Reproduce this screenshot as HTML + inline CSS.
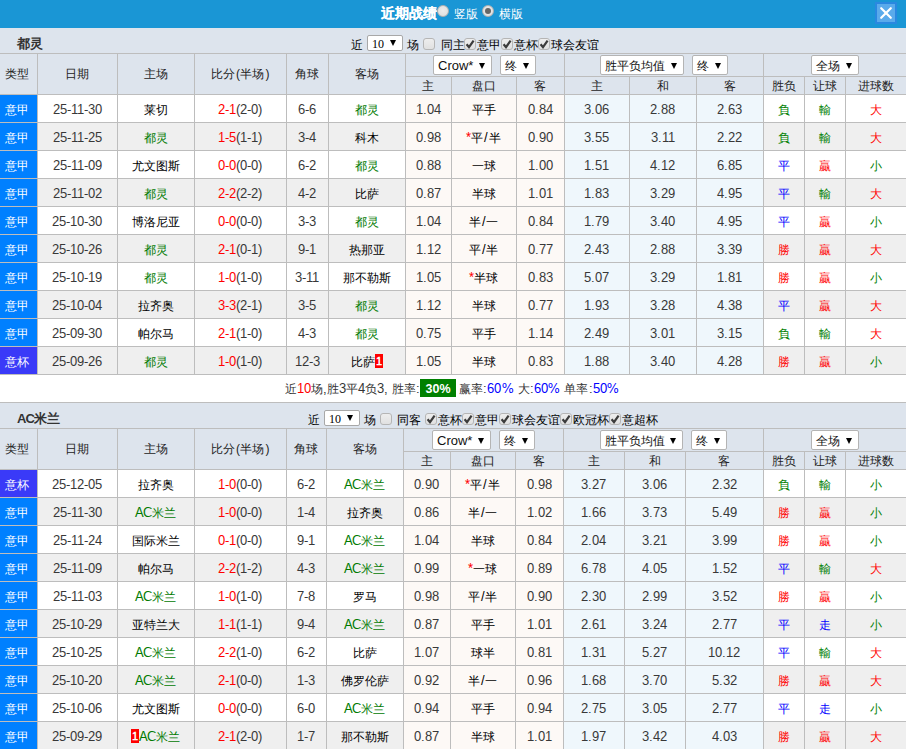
<!DOCTYPE html><html><head><meta charset="utf-8"><style>
.ac{letter-spacing:-1.1px;font-size:12px;margin-right:1px}
.ac2{letter-spacing:-1px}
@font-face{font-family:"NumF";src:local("Liberation Sans");size-adjust:104.2%;unicode-range:U+0000-00FF}
*{margin:0;padding:0;box-sizing:border-box}
html,body{width:906px;height:749px;overflow:hidden;background:#fff}
body{font-family:"Liberation Sans",sans-serif;font-size:12px;color:#333;position:relative}
.title{position:absolute;left:0;top:0;width:906px;height:28px;background:#1a96d5;color:#fff}
.title .tt{position:absolute;left:381px;top:4px;font-size:14px;font-weight:bold;-webkit-text-stroke:0.1px #fff;line-height:18px;white-space:nowrap}
.radio{position:absolute;width:12px;height:12px;border-radius:50%;background:radial-gradient(circle at 50% 45%,#ececec,#dcdcdc);border:1px solid #b0b0b0}
.radio.on:after{content:"";position:absolute;left:2px;top:2px;width:6px;height:6px;border-radius:50%;background:#666}
.title .lab{position:absolute;top:7px;font-size:12px;line-height:15px}
.close{position:absolute;left:875px;top:2px;width:22px;height:22px;background:#2a88e0}
.close .in{position:absolute;left:2px;top:2px;width:18px;height:18px;background:#5aaaeb}
.sec{position:absolute;left:0;width:906px}
.bar{position:relative;height:26px;background:#dde4ed;border-bottom:1px solid #bdbdbd}
.tn{position:absolute;left:17px;top:8px;font-size:13px;line-height:16px;color:#333}
.ct{position:absolute;top:9px;line-height:16px;white-space:nowrap;color:#000}
.cbx{position:absolute;top:10px;width:12px;height:12px;line-height:0}
.nsel{position:absolute;top:7px;width:36px;height:16px;background:#fff;border:1px solid #a8a8a8;border-radius:2px}
.nsel b{position:absolute;left:4px;top:1px;font:normal 12px/14px 'Liberation Serif',serif;color:#000}
.nsel i{position:absolute;left:22px;top:4px;width:0;height:0;border-left:3px solid transparent;border-right:3px solid transparent;border-top:6px solid #000}
.head{position:relative;height:41px;background:#dde4ed}
.hc{position:absolute;border-right:1px solid #bdbdbd;border-bottom:1px solid #bdbdbd;text-align:center;color:#222;white-space:nowrap}
.sel{position:absolute;top:1px;height:20px;background:#fff;border:1px solid #b4b4b4;border-radius:2px;line-height:20px;text-align:left;padding-left:4px;color:#111;font-size:12px;white-space:nowrap}
.sel.lat{font-size:13px;padding-left:4px}
.sel i{position:absolute;right:6px;top:7px;width:0;height:0;border-left:3px solid transparent;border-right:3px solid transparent;border-top:6px solid #000}
.row{display:flex;height:28px;font-family:"NumF","Liberation Sans",sans-serif;color:#383838}
.row>div.cj{color:#000}
.sl{margin:0 0.8px}
.row>div{height:28px;border-right:1px solid #bdbdbd;border-bottom:1px solid #bdbdbd;text-align:center;line-height:24px;padding-top:3px;padding-right:1px;white-space:nowrap;overflow:hidden;flex:none}
.row>div.c{background:#fff}
.row.ev>div.c{background:#efefef}
.row>div.o{background:#fdf9f6}
.row>div.a{background:#eff7fc}
.row>div.typ{background:#0080ff;color:#fff;padding-right:4px}
.row>div.typ.cup{background:#3a3af8}
.gr{color:#007a00}
.rd{color:#f00}
.bl{color:#00f}
.res.g{color:#008000}.res.r{color:#f00}.res.b{color:#00f}
.star{color:#f00}
.card{display:inline-block;background:#f00;color:#fff;width:8px;height:14px;line-height:14px;font-size:11px;font-weight:bold;vertical-align:top;margin-top:4px;text-align:center}
.sum{position:relative;height:28px;font-family:"NumF","Liberation Sans",sans-serif;border-bottom:1px solid #bdbdbd;background:#fff}
.sum .st{position:absolute;top:6px;line-height:16px;white-space:nowrap}
.pct{position:absolute;left:420px;top:4px;background:#008000;color:#fff;width:36px;height:18px;text-align:center;font-size:12.5px;font-weight:bold;line-height:21px;font-family:'Liberation Sans',sans-serif}
</style></head><body>
<svg width="0" height="0" style="position:absolute"><defs><linearGradient id="cbg" x1="0" y1="0" x2="0" y2="1"><stop offset="0" stop-color="#eeeeee"/><stop offset="1" stop-color="#e0e0e0"/></linearGradient></defs></svg>
<div class="title"><div class="tt">近期战绩</div><span class="radio" style="left:437px;top:5px"></span><span class="lab" style="left:454px">竖版</span><span class="radio on" style="left:482px;top:5px"></span><span class="lab" style="left:499px">横版</span><div class="close"><div class="in"><svg width="18" height="18" viewBox="0 0 18 18" style="position:absolute;left:0;top:0"><path d="M4.2 4.2L13.8 13.8M13.8 4.2L4.2 13.8" stroke="#fff" stroke-width="2.2" stroke-linecap="round"/></svg></div></div></div>
<div class="sec" style="top:28px">
<div class="bar"><b class="tn">都灵</b><span class="ct" style="left:351px">近</span><span class="nsel" style="left:367px"><b>10</b><i></i></span><span class="ct" style="left:407px">场</span><span class="cbx" style="left:423px"><svg width="12" height="12" viewBox="0 0 12 12"><rect x="0.5" y="0.5" width="11" height="11" rx="2.5" fill="url(#cbg)" stroke="#b5b5b5"/></svg></span><span class="ct" style="left:441px">同主</span><span class="cbx" style="left:464px"><svg width="12" height="12" viewBox="0 0 12 12"><rect x="0.5" y="0.5" width="11" height="11" rx="2.5" fill="url(#cbg)" stroke="#b5b5b5"/><path d="M2.6 6.2L5 9.2L9.6 2.6" fill="none" stroke="#3c3c3c" stroke-width="2.2" stroke-linejoin="miter"/></svg></span><span class="ct" style="left:477px">意甲</span><span class="cbx" style="left:501px"><svg width="12" height="12" viewBox="0 0 12 12"><rect x="0.5" y="0.5" width="11" height="11" rx="2.5" fill="url(#cbg)" stroke="#b5b5b5"/><path d="M2.6 6.2L5 9.2L9.6 2.6" fill="none" stroke="#3c3c3c" stroke-width="2.2" stroke-linejoin="miter"/></svg></span><span class="ct" style="left:514px">意杯</span><span class="cbx" style="left:538px"><svg width="12" height="12" viewBox="0 0 12 12"><rect x="0.5" y="0.5" width="11" height="11" rx="2.5" fill="url(#cbg)" stroke="#b5b5b5"/><path d="M2.6 6.2L5 9.2L9.6 2.6" fill="none" stroke="#3c3c3c" stroke-width="2.2" stroke-linejoin="miter"/></svg></span><span class="ct" style="left:551px">球会友谊</span></div>
<div class="head">
<div class="hc" style="left:0px;top:0px;width:38px;height:41px;line-height:40px;padding-right:4px">类型</div>
<div class="hc" style="left:38px;top:0px;width:80px;height:41px;line-height:40px;padding-right:1px">日期</div>
<div class="hc" style="left:118px;top:0px;width:77px;height:41px;line-height:40px;padding-right:1px">主场</div>
<div class="hc" style="left:195px;top:0px;width:92px;height:41px;line-height:40px;padding-right:1px">比分<span style="margin-left:1.5px">(</span>半场<span style="margin-left:1.5px">)</span></div>
<div class="hc" style="left:287px;top:0px;width:42px;height:41px;line-height:40px;padding-right:1px">角球</div>
<div class="hc" style="left:329px;top:0px;width:77px;height:41px;line-height:40px;padding-right:1px">客场</div>
<div class="hc" style="left:406px;top:0px;width:159px;height:23px;"></div>
<div class="hc" style="left:565px;top:0px;width:199px;height:23px;"></div>
<div class="hc" style="left:764px;top:0px;width:143px;height:23px;"></div>
<span class="sel lat" style="left:433px;width:59px">Crow*<i></i></span>
<span class="sel " style="left:500px;width:36px">终<i></i></span>
<span class="sel " style="left:600px;width:84px">胜平负均值<i></i></span>
<span class="sel " style="left:692px;width:36px">终<i></i></span>
<span class="sel " style="left:811px;width:48px">全场<i></i></span>
<div class="hc" style="left:406px;top:23px;width:46px;height:18px;line-height:16px;padding-top:1px;padding-right:1px">主</div>
<div class="hc" style="left:452px;top:23px;width:65px;height:18px;line-height:16px;padding-top:1px;padding-right:1px">盘口</div>
<div class="hc" style="left:517px;top:23px;width:48px;height:18px;line-height:16px;padding-top:1px;padding-right:1px">客</div>
<div class="hc" style="left:565px;top:23px;width:65px;height:18px;line-height:16px;padding-top:1px;padding-right:1px">主</div>
<div class="hc" style="left:630px;top:23px;width:67px;height:18px;line-height:16px;padding-top:1px;padding-right:1px">和</div>
<div class="hc" style="left:697px;top:23px;width:67px;height:18px;line-height:16px;padding-top:1px;padding-right:1px">客</div>
<div class="hc" style="left:764px;top:23px;width:41px;height:18px;line-height:16px;padding-top:1px;padding-right:1px">胜负</div>
<div class="hc" style="left:805px;top:23px;width:41px;height:18px;line-height:16px;padding-top:1px;padding-right:1px">让球</div>
<div class="hc" style="left:846px;top:23px;width:61px;height:18px;line-height:16px;padding-top:1px;padding-right:1px">进球数</div>
</div>
<div class="rows">
<div class="row">
<div class="typ" style="width:38px">意甲</div>
<div class="c" style="width:80px">25-11-30</div>
<div class="c cj" style="width:77px"><span>莱切</span></div>
<div class="c" style="width:92px"><span class="rd">2-1</span>(2-0)</div>
<div class="c" style="width:42px">6-6</div>
<div class="c cj" style="width:77px"><span class="gr">都灵</span></div>
<div class="o" style="width:46px">1.04</div>
<div class="o cj" style="width:65px">平手</div>
<div class="o" style="width:48px">0.84</div>
<div class="a" style="width:65px">3.06</div>
<div class="a" style="width:67px">2.88</div>
<div class="a" style="width:67px">2.63</div>
<div class="c res g" style="width:41px">負</div>
<div class="c res g" style="width:41px">輸</div>
<div class="c res r" style="width:61px">大</div>
</div>
<div class="row ev">
<div class="typ" style="width:38px">意甲</div>
<div class="c" style="width:80px">25-11-25</div>
<div class="c cj" style="width:77px"><span class="gr">都灵</span></div>
<div class="c" style="width:92px"><span class="rd">1-5</span>(1-1)</div>
<div class="c" style="width:42px">3-4</div>
<div class="c cj" style="width:77px"><span>科木</span></div>
<div class="o" style="width:46px">0.98</div>
<div class="o cj" style="width:65px"><span class="star">*</span>平<span class="sl">/</span>半</div>
<div class="o" style="width:48px">0.90</div>
<div class="a" style="width:65px">3.55</div>
<div class="a" style="width:67px">3.11</div>
<div class="a" style="width:67px">2.22</div>
<div class="c res g" style="width:41px">負</div>
<div class="c res g" style="width:41px">輸</div>
<div class="c res r" style="width:61px">大</div>
</div>
<div class="row">
<div class="typ" style="width:38px">意甲</div>
<div class="c" style="width:80px">25-11-09</div>
<div class="c cj" style="width:77px"><span>尤文图斯</span></div>
<div class="c" style="width:92px"><span class="rd">0-0</span>(0-0)</div>
<div class="c" style="width:42px">6-2</div>
<div class="c cj" style="width:77px"><span class="gr">都灵</span></div>
<div class="o" style="width:46px">0.88</div>
<div class="o cj" style="width:65px">一球</div>
<div class="o" style="width:48px">1.00</div>
<div class="a" style="width:65px">1.51</div>
<div class="a" style="width:67px">4.12</div>
<div class="a" style="width:67px">6.85</div>
<div class="c res b" style="width:41px">平</div>
<div class="c res r" style="width:41px">贏</div>
<div class="c res g" style="width:61px">小</div>
</div>
<div class="row ev">
<div class="typ" style="width:38px">意甲</div>
<div class="c" style="width:80px">25-11-02</div>
<div class="c cj" style="width:77px"><span class="gr">都灵</span></div>
<div class="c" style="width:92px"><span class="rd">2-2</span>(2-2)</div>
<div class="c" style="width:42px">4-2</div>
<div class="c cj" style="width:77px"><span>比萨</span></div>
<div class="o" style="width:46px">0.87</div>
<div class="o cj" style="width:65px">半球</div>
<div class="o" style="width:48px">1.01</div>
<div class="a" style="width:65px">1.83</div>
<div class="a" style="width:67px">3.29</div>
<div class="a" style="width:67px">4.95</div>
<div class="c res b" style="width:41px">平</div>
<div class="c res g" style="width:41px">輸</div>
<div class="c res r" style="width:61px">大</div>
</div>
<div class="row">
<div class="typ" style="width:38px">意甲</div>
<div class="c" style="width:80px">25-10-30</div>
<div class="c cj" style="width:77px"><span>博洛尼亚</span></div>
<div class="c" style="width:92px"><span class="rd">0-0</span>(0-0)</div>
<div class="c" style="width:42px">3-3</div>
<div class="c cj" style="width:77px"><span class="gr">都灵</span></div>
<div class="o" style="width:46px">1.04</div>
<div class="o cj" style="width:65px">半<span class="sl">/</span>一</div>
<div class="o" style="width:48px">0.84</div>
<div class="a" style="width:65px">1.79</div>
<div class="a" style="width:67px">3.40</div>
<div class="a" style="width:67px">4.95</div>
<div class="c res b" style="width:41px">平</div>
<div class="c res r" style="width:41px">贏</div>
<div class="c res g" style="width:61px">小</div>
</div>
<div class="row ev">
<div class="typ" style="width:38px">意甲</div>
<div class="c" style="width:80px">25-10-26</div>
<div class="c cj" style="width:77px"><span class="gr">都灵</span></div>
<div class="c" style="width:92px"><span class="rd">2-1</span>(0-1)</div>
<div class="c" style="width:42px">9-1</div>
<div class="c cj" style="width:77px"><span>热那亚</span></div>
<div class="o" style="width:46px">1.12</div>
<div class="o cj" style="width:65px">平<span class="sl">/</span>半</div>
<div class="o" style="width:48px">0.77</div>
<div class="a" style="width:65px">2.43</div>
<div class="a" style="width:67px">2.88</div>
<div class="a" style="width:67px">3.39</div>
<div class="c res r" style="width:41px">勝</div>
<div class="c res r" style="width:41px">贏</div>
<div class="c res r" style="width:61px">大</div>
</div>
<div class="row">
<div class="typ" style="width:38px">意甲</div>
<div class="c" style="width:80px">25-10-19</div>
<div class="c cj" style="width:77px"><span class="gr">都灵</span></div>
<div class="c" style="width:92px"><span class="rd">1-0</span>(1-0)</div>
<div class="c" style="width:42px">3-11</div>
<div class="c cj" style="width:77px"><span>那不勒斯</span></div>
<div class="o" style="width:46px">1.05</div>
<div class="o cj" style="width:65px"><span class="star">*</span>半球</div>
<div class="o" style="width:48px">0.83</div>
<div class="a" style="width:65px">5.07</div>
<div class="a" style="width:67px">3.29</div>
<div class="a" style="width:67px">1.81</div>
<div class="c res r" style="width:41px">勝</div>
<div class="c res r" style="width:41px">贏</div>
<div class="c res g" style="width:61px">小</div>
</div>
<div class="row ev">
<div class="typ" style="width:38px">意甲</div>
<div class="c" style="width:80px">25-10-04</div>
<div class="c cj" style="width:77px"><span>拉齐奥</span></div>
<div class="c" style="width:92px"><span class="rd">3-3</span>(2-1)</div>
<div class="c" style="width:42px">3-5</div>
<div class="c cj" style="width:77px"><span class="gr">都灵</span></div>
<div class="o" style="width:46px">1.12</div>
<div class="o cj" style="width:65px">半球</div>
<div class="o" style="width:48px">0.77</div>
<div class="a" style="width:65px">1.93</div>
<div class="a" style="width:67px">3.28</div>
<div class="a" style="width:67px">4.38</div>
<div class="c res b" style="width:41px">平</div>
<div class="c res r" style="width:41px">贏</div>
<div class="c res r" style="width:61px">大</div>
</div>
<div class="row">
<div class="typ" style="width:38px">意甲</div>
<div class="c" style="width:80px">25-09-30</div>
<div class="c cj" style="width:77px"><span>帕尔马</span></div>
<div class="c" style="width:92px"><span class="rd">2-1</span>(1-0)</div>
<div class="c" style="width:42px">4-3</div>
<div class="c cj" style="width:77px"><span class="gr">都灵</span></div>
<div class="o" style="width:46px">0.75</div>
<div class="o cj" style="width:65px">平手</div>
<div class="o" style="width:48px">1.14</div>
<div class="a" style="width:65px">2.49</div>
<div class="a" style="width:67px">3.01</div>
<div class="a" style="width:67px">3.15</div>
<div class="c res g" style="width:41px">負</div>
<div class="c res g" style="width:41px">輸</div>
<div class="c res r" style="width:61px">大</div>
</div>
<div class="row ev">
<div class="typ cup" style="width:38px">意杯</div>
<div class="c" style="width:80px">25-09-26</div>
<div class="c cj" style="width:77px"><span class="gr">都灵</span></div>
<div class="c" style="width:92px"><span class="rd">1-0</span>(1-0)</div>
<div class="c" style="width:42px">12-3</div>
<div class="c cj" style="width:77px"><span>比萨</span><span class="card">1</span></div>
<div class="o" style="width:46px">1.05</div>
<div class="o cj" style="width:65px">半球</div>
<div class="o" style="width:48px">0.83</div>
<div class="a" style="width:65px">1.88</div>
<div class="a" style="width:67px">3.40</div>
<div class="a" style="width:67px">4.28</div>
<div class="c res r" style="width:41px">勝</div>
<div class="c res r" style="width:41px">贏</div>
<div class="c res g" style="width:61px">小</div>
</div>
</div>
<div class="sum"><span class="st" style="left:285px;letter-spacing:0px">近<span class="rd">10</span>场,胜3平4负3, 胜率:</span><span class="pct">30%</span><span class="st" style="left:459px;letter-spacing:0.1px">赢率:<span class="bl">60%</span> 大:<span class="bl">60%</span> 单率:<span class="bl">50%</span></span></div>
</div>
<div class="sec" style="top:403px">
<div class="bar"><b class="tn"><span class="ac2">AC</span>米兰</b><span class="ct" style="left:308px">近</span><span class="nsel" style="left:324px"><b>10</b><i></i></span><span class="ct" style="left:364px">场</span><span class="cbx" style="left:380px"><svg width="12" height="12" viewBox="0 0 12 12"><rect x="0.5" y="0.5" width="11" height="11" rx="2.5" fill="url(#cbg)" stroke="#b5b5b5"/></svg></span><span class="ct" style="left:397px">同客</span><span class="cbx" style="left:425px"><svg width="12" height="12" viewBox="0 0 12 12"><rect x="0.5" y="0.5" width="11" height="11" rx="2.5" fill="url(#cbg)" stroke="#b5b5b5"/><path d="M2.6 6.2L5 9.2L9.6 2.6" fill="none" stroke="#3c3c3c" stroke-width="2.2" stroke-linejoin="miter"/></svg></span><span class="ct" style="left:438px">意杯</span><span class="cbx" style="left:462px"><svg width="12" height="12" viewBox="0 0 12 12"><rect x="0.5" y="0.5" width="11" height="11" rx="2.5" fill="url(#cbg)" stroke="#b5b5b5"/><path d="M2.6 6.2L5 9.2L9.6 2.6" fill="none" stroke="#3c3c3c" stroke-width="2.2" stroke-linejoin="miter"/></svg></span><span class="ct" style="left:475px">意甲</span><span class="cbx" style="left:499px"><svg width="12" height="12" viewBox="0 0 12 12"><rect x="0.5" y="0.5" width="11" height="11" rx="2.5" fill="url(#cbg)" stroke="#b5b5b5"/><path d="M2.6 6.2L5 9.2L9.6 2.6" fill="none" stroke="#3c3c3c" stroke-width="2.2" stroke-linejoin="miter"/></svg></span><span class="ct" style="left:512px">球会友谊</span><span class="cbx" style="left:560px"><svg width="12" height="12" viewBox="0 0 12 12"><rect x="0.5" y="0.5" width="11" height="11" rx="2.5" fill="url(#cbg)" stroke="#b5b5b5"/><path d="M2.6 6.2L5 9.2L9.6 2.6" fill="none" stroke="#3c3c3c" stroke-width="2.2" stroke-linejoin="miter"/></svg></span><span class="ct" style="left:573px">欧冠杯</span><span class="cbx" style="left:609px"><svg width="12" height="12" viewBox="0 0 12 12"><rect x="0.5" y="0.5" width="11" height="11" rx="2.5" fill="url(#cbg)" stroke="#b5b5b5"/><path d="M2.6 6.2L5 9.2L9.6 2.6" fill="none" stroke="#3c3c3c" stroke-width="2.2" stroke-linejoin="miter"/></svg></span><span class="ct" style="left:622px">意超杯</span></div>
<div class="head">
<div class="hc" style="left:0px;top:0px;width:38px;height:41px;line-height:40px;padding-right:4px">类型</div>
<div class="hc" style="left:38px;top:0px;width:80px;height:41px;line-height:40px;padding-right:1px">日期</div>
<div class="hc" style="left:118px;top:0px;width:77px;height:41px;line-height:40px;padding-right:1px">主场</div>
<div class="hc" style="left:195px;top:0px;width:92px;height:41px;line-height:40px;padding-right:1px">比分<span style="margin-left:1.5px">(</span>半场<span style="margin-left:1.5px">)</span></div>
<div class="hc" style="left:287px;top:0px;width:40px;height:41px;line-height:40px;padding-right:1px">角球</div>
<div class="hc" style="left:327px;top:0px;width:77px;height:41px;line-height:40px;padding-right:1px">客场</div>
<div class="hc" style="left:404px;top:0px;width:160px;height:23px;"></div>
<div class="hc" style="left:564px;top:0px;width:200px;height:23px;"></div>
<div class="hc" style="left:764px;top:0px;width:143px;height:23px;"></div>
<span class="sel lat" style="left:432px;width:59px">Crow*<i></i></span>
<span class="sel " style="left:499px;width:36px">终<i></i></span>
<span class="sel " style="left:600px;width:83px">胜平负均值<i></i></span>
<span class="sel " style="left:691px;width:36px">终<i></i></span>
<span class="sel " style="left:811px;width:48px">全场<i></i></span>
<div class="hc" style="left:404px;top:23px;width:47px;height:18px;line-height:16px;padding-top:1px;padding-right:1px">主</div>
<div class="hc" style="left:451px;top:23px;width:65px;height:18px;line-height:16px;padding-top:1px;padding-right:1px">盘口</div>
<div class="hc" style="left:516px;top:23px;width:48px;height:18px;line-height:16px;padding-top:1px;padding-right:1px">客</div>
<div class="hc" style="left:564px;top:23px;width:61px;height:18px;line-height:16px;padding-top:1px;padding-right:1px">主</div>
<div class="hc" style="left:625px;top:23px;width:61px;height:18px;line-height:16px;padding-top:1px;padding-right:1px">和</div>
<div class="hc" style="left:686px;top:23px;width:78px;height:18px;line-height:16px;padding-top:1px;padding-right:1px">客</div>
<div class="hc" style="left:764px;top:23px;width:41px;height:18px;line-height:16px;padding-top:1px;padding-right:1px">胜负</div>
<div class="hc" style="left:805px;top:23px;width:41px;height:18px;line-height:16px;padding-top:1px;padding-right:1px">让球</div>
<div class="hc" style="left:846px;top:23px;width:61px;height:18px;line-height:16px;padding-top:1px;padding-right:1px">进球数</div>
</div>
<div class="rows">
<div class="row">
<div class="typ cup" style="width:38px">意杯</div>
<div class="c" style="width:80px">25-12-05</div>
<div class="c cj" style="width:77px"><span>拉齐奥</span></div>
<div class="c" style="width:92px"><span class="rd">1-0</span>(0-0)</div>
<div class="c" style="width:40px">6-2</div>
<div class="c cj" style="width:77px"><span class="gr"><span class="ac">AC</span>米兰</span></div>
<div class="o" style="width:47px">0.90</div>
<div class="o cj" style="width:65px"><span class="star">*</span>平<span class="sl">/</span>半</div>
<div class="o" style="width:48px">0.98</div>
<div class="a" style="width:61px">3.27</div>
<div class="a" style="width:61px">3.06</div>
<div class="a" style="width:78px">2.32</div>
<div class="c res g" style="width:41px">負</div>
<div class="c res g" style="width:41px">輸</div>
<div class="c res g" style="width:61px">小</div>
</div>
<div class="row ev">
<div class="typ" style="width:38px">意甲</div>
<div class="c" style="width:80px">25-11-30</div>
<div class="c cj" style="width:77px"><span class="gr"><span class="ac">AC</span>米兰</span></div>
<div class="c" style="width:92px"><span class="rd">1-0</span>(0-0)</div>
<div class="c" style="width:40px">1-4</div>
<div class="c cj" style="width:77px"><span>拉齐奥</span></div>
<div class="o" style="width:47px">0.86</div>
<div class="o cj" style="width:65px">半<span class="sl">/</span>一</div>
<div class="o" style="width:48px">1.02</div>
<div class="a" style="width:61px">1.66</div>
<div class="a" style="width:61px">3.73</div>
<div class="a" style="width:78px">5.49</div>
<div class="c res r" style="width:41px">勝</div>
<div class="c res r" style="width:41px">贏</div>
<div class="c res g" style="width:61px">小</div>
</div>
<div class="row">
<div class="typ" style="width:38px">意甲</div>
<div class="c" style="width:80px">25-11-24</div>
<div class="c cj" style="width:77px"><span>国际米兰</span></div>
<div class="c" style="width:92px"><span class="rd">0-1</span>(0-0)</div>
<div class="c" style="width:40px">9-1</div>
<div class="c cj" style="width:77px"><span class="gr"><span class="ac">AC</span>米兰</span></div>
<div class="o" style="width:47px">1.04</div>
<div class="o cj" style="width:65px">半球</div>
<div class="o" style="width:48px">0.84</div>
<div class="a" style="width:61px">2.04</div>
<div class="a" style="width:61px">3.21</div>
<div class="a" style="width:78px">3.99</div>
<div class="c res r" style="width:41px">勝</div>
<div class="c res r" style="width:41px">贏</div>
<div class="c res g" style="width:61px">小</div>
</div>
<div class="row ev">
<div class="typ" style="width:38px">意甲</div>
<div class="c" style="width:80px">25-11-09</div>
<div class="c cj" style="width:77px"><span>帕尔马</span></div>
<div class="c" style="width:92px"><span class="rd">2-2</span>(1-2)</div>
<div class="c" style="width:40px">4-3</div>
<div class="c cj" style="width:77px"><span class="gr"><span class="ac">AC</span>米兰</span></div>
<div class="o" style="width:47px">0.99</div>
<div class="o cj" style="width:65px"><span class="star">*</span>一球</div>
<div class="o" style="width:48px">0.89</div>
<div class="a" style="width:61px">6.78</div>
<div class="a" style="width:61px">4.05</div>
<div class="a" style="width:78px">1.52</div>
<div class="c res b" style="width:41px">平</div>
<div class="c res g" style="width:41px">輸</div>
<div class="c res r" style="width:61px">大</div>
</div>
<div class="row">
<div class="typ" style="width:38px">意甲</div>
<div class="c" style="width:80px">25-11-03</div>
<div class="c cj" style="width:77px"><span class="gr"><span class="ac">AC</span>米兰</span></div>
<div class="c" style="width:92px"><span class="rd">1-0</span>(1-0)</div>
<div class="c" style="width:40px">7-8</div>
<div class="c cj" style="width:77px"><span>罗马</span></div>
<div class="o" style="width:47px">0.98</div>
<div class="o cj" style="width:65px">平<span class="sl">/</span>半</div>
<div class="o" style="width:48px">0.90</div>
<div class="a" style="width:61px">2.30</div>
<div class="a" style="width:61px">2.99</div>
<div class="a" style="width:78px">3.52</div>
<div class="c res r" style="width:41px">勝</div>
<div class="c res r" style="width:41px">贏</div>
<div class="c res g" style="width:61px">小</div>
</div>
<div class="row ev">
<div class="typ" style="width:38px">意甲</div>
<div class="c" style="width:80px">25-10-29</div>
<div class="c cj" style="width:77px"><span>亚特兰大</span></div>
<div class="c" style="width:92px"><span class="rd">1-1</span>(1-1)</div>
<div class="c" style="width:40px">9-4</div>
<div class="c cj" style="width:77px"><span class="gr"><span class="ac">AC</span>米兰</span></div>
<div class="o" style="width:47px">0.87</div>
<div class="o cj" style="width:65px">平手</div>
<div class="o" style="width:48px">1.01</div>
<div class="a" style="width:61px">2.61</div>
<div class="a" style="width:61px">3.24</div>
<div class="a" style="width:78px">2.77</div>
<div class="c res b" style="width:41px">平</div>
<div class="c res b" style="width:41px">走</div>
<div class="c res g" style="width:61px">小</div>
</div>
<div class="row">
<div class="typ" style="width:38px">意甲</div>
<div class="c" style="width:80px">25-10-25</div>
<div class="c cj" style="width:77px"><span class="gr"><span class="ac">AC</span>米兰</span></div>
<div class="c" style="width:92px"><span class="rd">2-2</span>(1-0)</div>
<div class="c" style="width:40px">6-2</div>
<div class="c cj" style="width:77px"><span>比萨</span></div>
<div class="o" style="width:47px">1.07</div>
<div class="o cj" style="width:65px">球半</div>
<div class="o" style="width:48px">0.81</div>
<div class="a" style="width:61px">1.31</div>
<div class="a" style="width:61px">5.27</div>
<div class="a" style="width:78px">10.12</div>
<div class="c res b" style="width:41px">平</div>
<div class="c res g" style="width:41px">輸</div>
<div class="c res r" style="width:61px">大</div>
</div>
<div class="row ev">
<div class="typ" style="width:38px">意甲</div>
<div class="c" style="width:80px">25-10-20</div>
<div class="c cj" style="width:77px"><span class="gr"><span class="ac">AC</span>米兰</span></div>
<div class="c" style="width:92px"><span class="rd">2-1</span>(0-0)</div>
<div class="c" style="width:40px">1-3</div>
<div class="c cj" style="width:77px"><span>佛罗伦萨</span></div>
<div class="o" style="width:47px">0.92</div>
<div class="o cj" style="width:65px">半<span class="sl">/</span>一</div>
<div class="o" style="width:48px">0.96</div>
<div class="a" style="width:61px">1.68</div>
<div class="a" style="width:61px">3.70</div>
<div class="a" style="width:78px">5.32</div>
<div class="c res r" style="width:41px">勝</div>
<div class="c res r" style="width:41px">贏</div>
<div class="c res r" style="width:61px">大</div>
</div>
<div class="row">
<div class="typ" style="width:38px">意甲</div>
<div class="c" style="width:80px">25-10-06</div>
<div class="c cj" style="width:77px"><span>尤文图斯</span></div>
<div class="c" style="width:92px"><span class="rd">0-0</span>(0-0)</div>
<div class="c" style="width:40px">6-0</div>
<div class="c cj" style="width:77px"><span class="gr"><span class="ac">AC</span>米兰</span></div>
<div class="o" style="width:47px">0.94</div>
<div class="o cj" style="width:65px">平手</div>
<div class="o" style="width:48px">0.94</div>
<div class="a" style="width:61px">2.75</div>
<div class="a" style="width:61px">3.05</div>
<div class="a" style="width:78px">2.77</div>
<div class="c res b" style="width:41px">平</div>
<div class="c res b" style="width:41px">走</div>
<div class="c res g" style="width:61px">小</div>
</div>
<div class="row ev">
<div class="typ" style="width:38px">意甲</div>
<div class="c" style="width:80px">25-09-29</div>
<div class="c cj" style="width:77px"><span class="card">1</span><span class="gr"><span class="ac">AC</span>米兰</span></div>
<div class="c" style="width:92px"><span class="rd">2-1</span>(2-0)</div>
<div class="c" style="width:40px">1-7</div>
<div class="c cj" style="width:77px"><span>那不勒斯</span></div>
<div class="o" style="width:47px">0.87</div>
<div class="o cj" style="width:65px">半球</div>
<div class="o" style="width:48px">1.01</div>
<div class="a" style="width:61px">1.97</div>
<div class="a" style="width:61px">3.42</div>
<div class="a" style="width:78px">4.03</div>
<div class="c res r" style="width:41px">勝</div>
<div class="c res r" style="width:41px">贏</div>
<div class="c res r" style="width:61px">大</div>
</div>
</div>
</div>
</body></html>
